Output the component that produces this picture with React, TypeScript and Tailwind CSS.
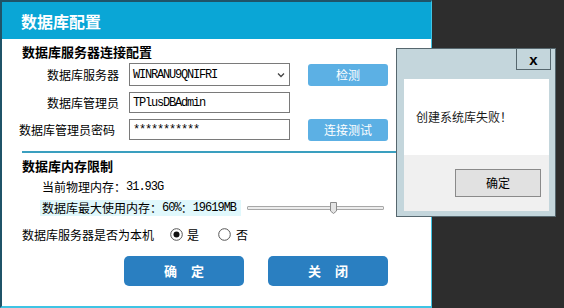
import React from "react";

const cjk = { fontFamily: '"Noto Sans CJK SC", "Noto Sans", sans-serif' };
const mono = { fontFamily: '"Liberation Mono", "DejaVu Sans Mono", monospace' };

function Radio({ checked }: { checked: boolean }) {
  return (
    <svg width="13" height="13" viewBox="0 0 13 13" className="shrink-0">
      <circle cx="6.5" cy="6.5" r="5.8" fill="#fff" stroke="#555" strokeWidth="1" />
      {checked && <circle cx="6.5" cy="6.5" r="3" fill="#111" />}
    </svg>
  );
}

export default function App() {
  return (
    <div className="relative w-[564px] h-[308px] overflow-hidden bg-[#2d2d2d]" style={cjk}>
      <div className="w-[432px] h-[308px] bg-white border-t-2 border-l-2 border-[#1f5368] border-r border-r-[#3fc4e4] border-b-2 border-b-[#3fc4e4] flex flex-col">
        <div className="h-[37px] bg-[#0aa6d6] flex items-center pl-[19px] text-white font-bold text-[16px] leading-none">
          数据库配置
        </div>

        <div className="mt-[5px] pl-[20px] h-[16px] text-[13px] leading-[16px] font-bold text-black">
          数据库服务器连接配置
        </div>

        {/* row 1 */}
        <div className="mt-[3px] h-[23px] flex items-center pl-[17px]">
          <div className="w-[100px] text-right text-[12px] leading-[16px] text-black">数据库服务器</div>
          <div className="ml-[10px] w-[161px] h-[23px] border border-[#7a7a7a] bg-white flex items-center justify-between pl-[3px] pr-[4px]">
            <span className="text-[12px] tracking-[-1.2px] text-black" style={mono}>WINRANU9QNIFRI</span>
            <svg width="8" height="6" viewBox="0 0 8 6">
              <path d="M1 1.5 L4 4.5 L7 1.5" fill="none" stroke="#444" strokeWidth="1.3" />
            </svg>
          </div>
          <div className="ml-[18px] w-[80px] h-[22px] rounded-[3px] bg-[#5cb0e4] text-white text-[12px] flex items-center justify-center">
            检测
          </div>
        </div>

        {/* row 2 */}
        <div className="mt-[6px] h-[21px] flex items-center pl-[17px]">
          <div className="w-[100px] text-right text-[12px] leading-[16px] text-black">数据库管理员</div>
          <div className="ml-[10px] w-[161px] h-[21px] border border-[#7a7a7a] bg-white flex items-center pl-[3px]">
            <span className="text-[12px] tracking-[-1.2px] text-black" style={mono}>TPlusDBAdmin</span>
          </div>
        </div>

        {/* row 3 */}
        <div className="mt-[6px] h-[21px] flex items-center pl-[17px]">
          <div className="w-[100px] text-right pr-[4px] text-[12px] leading-[16px] text-black">数据库管理员密码</div>
          <div className="ml-[10px] w-[161px] h-[21px] border border-[#7a7a7a] bg-white flex items-center pl-[3px]">
            <span className="text-[12px] tracking-[-1.2px] text-black" style={mono}>***********</span>
          </div>
          <div className="ml-[18px] w-[80px] h-[22px] rounded-[3px] bg-[#5cb0e4] text-white text-[12px] flex items-center justify-center">
            连接测试
          </div>
        </div>

        <div className="mt-[11px] ml-[20px] h-[2px] bg-[#3a9fbf]" />

        <div className="mt-[5px] pl-[20px] h-[16px] text-[13px] leading-[16px] font-bold text-black">
          数据库内存限制
        </div>

        <div className="mt-[5px] pl-[40px] h-[16px] text-[12px] leading-[16px] text-black flex items-center">
          <span>当前物理内存：</span>
          <span className="tracking-[-1px]" style={mono}>31.93G</span>
        </div>

        <div className="mt-[5px] h-[16px] flex items-center pl-[38px]">
          <div className="w-[201px] h-[16px] bg-[#e0f8fc] pl-[2px] text-[12px] leading-[16px] text-black flex items-center whitespace-nowrap">
            <span>数据库最大使用内存：</span>
            <span className="tracking-[-1px]" style={mono}>60%</span>
            <span>：</span>
            <span className="tracking-[-1px]" style={mono}>19619MB</span>
          </div>
          <div className="relative ml-[6px] w-[137px] h-[16px] flex items-center">
            <div className="w-full h-[4px] bg-[#ececec] border border-[#a8a8a8] rounded-[1px]" />
            <svg className="absolute left-[83px] top-[2px]" width="7" height="12" viewBox="0 0 7 12">
              <path d="M0.5 0.5 H6.5 V9 L3.5 11.5 L0.5 9 Z" fill="#e4e4e4" stroke="#8a8a8a" strokeWidth="1" />
            </svg>
          </div>
        </div>

        <div className="mt-[10px] h-[17px] flex items-center pl-[20px] text-[12px] leading-[16px] text-black">
          <span>数据库服务器是否为本机</span>
          <span className="ml-[16px] flex items-center"><Radio checked /></span>
          <span className="ml-[4px]">是</span>
          <span className="ml-[19px] flex items-center"><Radio checked={false} /></span>
          <span className="ml-[5px]">否</span>
        </div>

        <div className="mt-[13px] flex pl-[122px] gap-[24px]">
          <div className="w-[120px] h-[30px] rounded-[5px] bg-[#2a7fc1] text-white font-bold text-[13px] flex items-center justify-center tracking-[14px] pl-[14px]">
            确定
          </div>
          <div className="w-[120px] h-[30px] rounded-[5px] bg-[#2a7fc1] text-white font-bold text-[13px] flex items-center justify-center tracking-[14px] pl-[14px]">
            关闭
          </div>
        </div>
      </div>

      {/* popup message box */}
      <div className="absolute left-[396px] top-[48px] w-[160px] h-[169px] bg-[#c4d6dc] border border-[#56676e] flex flex-col">
        <div className="h-[30px] flex justify-end pr-[4px]">
          <div className="w-[35px] h-[21px] border-l border-b border-r border-[#56676e] flex items-center justify-center">
            <span className="text-[15px] font-bold text-black leading-none" style={{ fontFamily: '"Liberation Sans", Arial, sans-serif' }}>x</span>
          </div>
        </div>
        <div className="ml-[7px] mr-[6px] h-[76px] bg-white flex items-center pl-[12px] text-[12px] text-[#1a1a1a]">
          创建系统库失败！
        </div>
        <div className="ml-[7px] mr-[6px] h-[56px] bg-[#f0f0f0] flex items-center justify-end pr-[8px]">
          <div className="w-[86px] h-[28px] bg-[#e1e1e1] border border-[#8a8a8a] flex items-center justify-center text-[12px] text-black">
            确定
          </div>
        </div>
      </div>
    </div>
  );
}
